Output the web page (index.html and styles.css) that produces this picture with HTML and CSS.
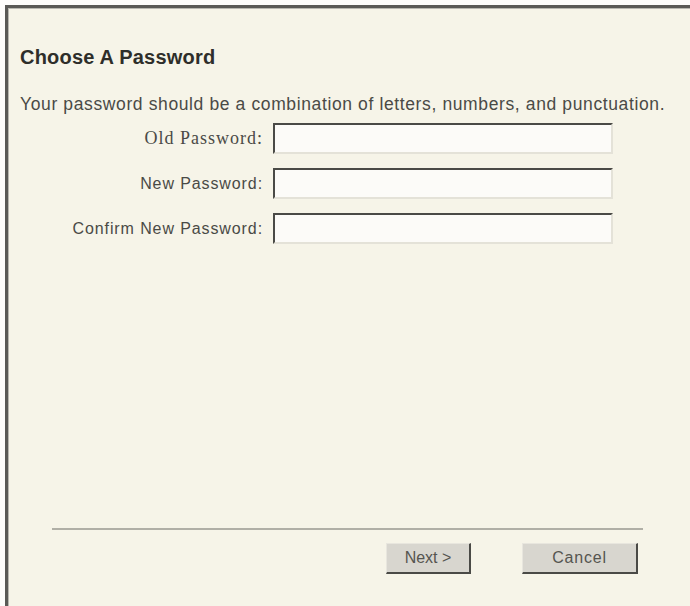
FILE: index.html
```html
<!DOCTYPE html>
<html>
<head>
<meta charset="utf-8">
<link rel="stylesheet" href="styles.css">
</head>
<body>
<div class="frame">
  <h1 class="title">Choose A Password</h1>
  <p class="intro">Your password should be a combination of letters, numbers, and punctuation.</p>
  <div class="form">
    <label class="label serif">Old Password:</label>
    <div class="field"></div>
    <label class="label">New Password:</label>
    <div class="field"></div>
    <label class="label">Confirm New Password:</label>
    <div class="field"></div>
  </div>
  <div class="footer">
    <div class="sep"></div>
    <div class="buttons">
      <button class="btn">Next &gt;</button>
      <button class="btn btn-cancel">Cancel</button>
    </div>
  </div>
</div>
</body>
</html>
```
FILE: styles.css
```css
html, body {
  margin: 0;
  padding: 0;
  background: #fdfdfb;
  height: 606px;
  overflow: hidden;
}
body {
  padding: 5px 0 0 5px;
  box-sizing: border-box;
  font-family: "Liberation Sans", Arial, sans-serif;
  color: #3a3a36;
}
.frame {
  height: 601px;
  box-sizing: border-box;
  background: #f6f4e8;
  border-left: 3px solid #5a5a56;
  border-top: 3px solid #5a5a56;
  box-shadow: inset 1px 1px 0 #b8b8b0;
  padding: 0 0 0 12px;
  display: flex;
  flex-direction: column;
}
.title {
  margin: 38px 0 0 0;
  font-size: 20px;
  letter-spacing: 0.2px;
  font-weight: bold;
  color: #2e2e2a;
  line-height: 22px;
}
.intro {
  margin: 26px 0 0 0;
  font-size: 17.5px;
  letter-spacing: 0.62px;
  line-height: 20px;
  color: #4a4a46;
  white-space: nowrap;
}
.form {
  display: grid;
  grid-template-columns: 243px 340px;
  column-gap: 10px;
  row-gap: 14px;
  margin-top: 9px;
  align-items: center;
}
.label {
  text-align: right;
  font-size: 16px;
  letter-spacing: 0.9px;
  color: #4a4a46;
}
.label.serif {
  font-family: "Liberation Serif", "Times New Roman", serif;
  font-size: 18px;
  letter-spacing: 1px;
}
.field {
  height: 31px;
  box-sizing: border-box;
  background: #fcfbf8;
  border-top: 2px solid #4a4a46;
  border-left: 2px solid #4a4a46;
  border-right: 2px solid #e4e2d8;
  border-bottom: 2px solid #e4e2d8;
}
.footer {
  margin-top: auto;
  padding-bottom: 32px;
}
.sep {
  margin-left: 32px;
  width: 591px;
  height: 2px;
  background: #b0afa6;
}
.buttons {
  display: flex;
  gap: 51px;
  margin-top: 13px;
  margin-left: 366px;
}
.btn {
  width: 85px;
  height: 31px;
  box-sizing: border-box;
  background: #d8d6cf;
  border: none;
  border-top: 1px solid #e8e6de;
  border-left: 1px solid #e8e6de;
  border-right: 2px solid #4a4a46;
  border-bottom: 2px solid #4a4a46;
  font-family: "Liberation Sans", Arial, sans-serif;
  font-size: 16px;
  color: #555550;
  padding: 0;
}
.btn-cancel {
  width: 116px;
  letter-spacing: 0.8px;
}
```
